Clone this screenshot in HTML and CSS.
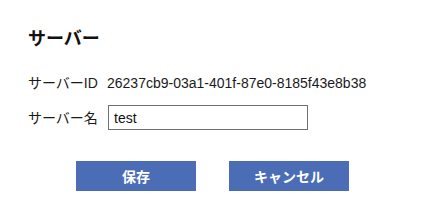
FILE: index.html
```html
<!DOCTYPE html>
<html lang="ja">
<head>
<meta charset="utf-8">
<title>サーバー</title>
<link rel="stylesheet" href="styles.css">
</head>
<body>
<div class="page">
  <h1 class="title">サーバー</h1>
  <div class="form">
    <div class="label">サーバーID</div>
    <div class="value">26237cb9-03a1-401f-87e0-8185f43e8b38</div>
    <label class="label" for="name">サーバー名</label>
    <input class="input" id="name" type="text" value="test">
  </div>
  <div class="actions">
    <button class="btn" type="button">保存</button>
    <button class="btn" type="button">キャンセル</button>
  </div>
</div>
</body>
</html>
```
FILE: styles.css
```css
html, body {
  margin: 0;
  padding: 0;
  background: #ffffff;
}
body {
  font-family: "Liberation Sans", "Noto Sans CJK JP", sans-serif;
  color: #1a1a1a;
  font-size: 14px;
}
.page {
  padding: 27px 28px 0 28px;
}
.title {
  margin: 0;
  font-size: 18px;
  line-height: 24px;
  font-weight: bold;
  color: #111;
}
.form {
  margin-top: 22px;
  display: grid;
  grid-template-columns: 79px auto;
  row-gap: 12px;
  align-items: center;
  justify-content: start;
}
.label {
  line-height: 20px;
}
.value {
  line-height: 20px;
}
.input {
  box-sizing: border-box;
  margin-left: 1px;
  width: 200px;
  height: 25px;
  border: 1px solid #707070;
  padding: 0 5px;
  font-family: "Liberation Sans", "Noto Sans CJK JP", sans-serif;
  font-size: 14px;
  color: #111;
  outline: none;
}
.actions {
  margin-top: 31px;
  padding-left: 48px;
  display: flex;
  gap: 33px;
}
.btn {
  width: 120px;
  height: 30px;
  border: none;
  background: #4b6db5;
  color: #ffffff;
  font-family: "Liberation Sans", "Noto Sans CJK JP", sans-serif;
  font-size: 14px;
  font-weight: bold;
  padding: 0;
}
```
